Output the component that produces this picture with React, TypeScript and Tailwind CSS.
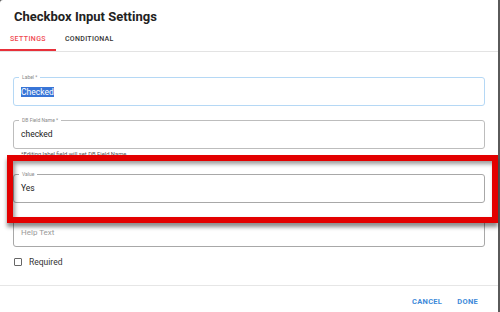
import React from "react";

const font = { fontFamily: "Roboto, 'Liberation Sans', sans-serif" };

function Field({
  label,
  children,
  border,
  className = "",
}: {
  label?: string;
  children: React.ReactNode;
  border: string;
  className?: string;
}) {
  return (
    <div className={`relative h-[29px] rounded-[3px] border ${border} flex items-center pl-[7px] ${className}`}>
      {label && (
        <span className="absolute left-[5px] top-[-4px] bg-white px-[3px] text-[5px] leading-[7px] text-[#8a8a8a]">
          {label}
        </span>
      )}
      {children}
    </div>
  );
}

export default function App() {
  return (
    <div className="w-[500px] h-[312px] bg-[#5a5a5a] overflow-hidden" style={font}>
      <div className="relative w-[498px] h-[312px] bg-white rounded-tl-[3px] flex flex-col">
        <h1 className="pl-[14px] pt-[9px] text-[13px] font-bold leading-[16px] text-[#222]">
          Checkbox Input Settings
        </h1>
        <div className="mt-[9px] flex border-b border-[#e3e3e3]">
          <div className="w-[56px] border-b-2 border-[#e8303a] pb-[5px] text-center text-[7px] font-medium leading-[10px] tracking-[0.4px] text-[#f0484f]">
            SETTINGS
          </div>
          <div className="pl-[9px] text-[7px] font-medium leading-[10px] tracking-[0.3px] text-[#333]">
            CONDITIONAL
          </div>
        </div>

        <div className="flex flex-col px-[13px] pt-[25px]">
          <Field label="Label *" border="border-[#b5d8f5]">
            <span className="bg-[#3875d7] text-[8.5px] leading-[10px] text-white">Checked</span>
          </Field>
          <Field label="DB Field Name *" border="border-[#bdbdbd]" className="mt-[14px]">
            <span className="text-[8.5px] text-[#222]">checked</span>
          </Field>
          <p className="pl-[8px] pt-[1px] text-[5.8px] leading-[8px] text-[#555]">
            *Editing label field will set DB Field Name
          </p>
          <Field label="Value" border="border-[#a8a8a8]" className="mt-[16px]">
            <span className="text-[8.5px] text-[#222]">Yes</span>
          </Field>
          <Field border="border-[#a8a8a8]" className="mt-[15px]">
            <span className="text-[8px] text-[#9a9a9a]">Help Text</span>
          </Field>
          <label className="mt-[10px] flex items-center gap-[7px] pl-[1px]">
            <span className="h-[8px] w-[8px] rounded-[1px] border border-[#666]" />
            <span className="text-[8.5px] leading-[10px] text-[#333]">Required</span>
          </label>
        </div>

        <div className="mt-[18px] border-t border-[#e6e6e6] flex justify-end gap-[15px] pr-[20px] pt-[10px]">
          <button className="text-[7.5px] font-bold tracking-[0.3px] text-[#3d8ad9]">CANCEL</button>
          <button className="text-[7.5px] font-bold tracking-[0.3px] text-[#3d8ad9]">DONE</button>
        </div>

        <div className="absolute left-[7px] top-[155px] h-[68px] w-[491px] border-[6px] border-[#e30000] shadow-[0_4px_4px_rgba(0,0,0,0.45),inset_2px_3px_4px_rgba(0,0,0,0.4)]" />
      </div>
    </div>
  );
}
